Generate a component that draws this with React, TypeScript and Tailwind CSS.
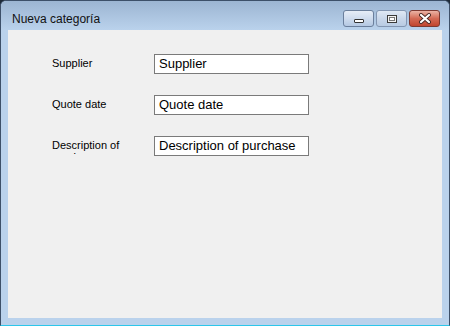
import React from "react";

const fields = [
  { label: "Supplier", value: "Supplier" },
  { label: "Quote date", value: "Quote date" },
  { label: "Description of purchase", value: "Description of purchase" },
];

const CaptionButtons: React.FC = () => (
  <div className="flex items-start gap-[2px] pt-[9px] pr-[9px]">
    <div className="w-[31px] h-[17px] rounded-[3px] border border-[#6b7f9c] bg-gradient-to-b from-[#e6edf7] via-[#cfdcee] to-[#b4c8e2] flex items-end justify-center pb-[3px]">
      <div className="w-[10px] h-[4px] bg-white border border-[#333] rounded-[1px]" />
    </div>
    <div className="w-[31px] h-[17px] rounded-[3px] border border-[#8396b2] bg-gradient-to-b from-[#dfe8f4] via-[#c9d7ea] to-[#b8cbe3] flex items-center justify-center">
      <div className="w-[10px] h-[8px] border border-[#3a3a3a] bg-[#f4f4f4] flex items-center justify-center">
        <div className="w-[6px] h-[4px] border border-[#777] bg-white" />
      </div>
    </div>
    <div className="w-[31px] h-[17px] rounded-[3px] border border-[#7d3a32] bg-gradient-to-b from-[#eab3a5] via-[#d36a55] to-[#c1452f] flex items-center justify-center">
      <svg width="14" height="11" viewBox="0 0 14 11">
        <path d="M3 2 L11 9 M11 2 L3 9" stroke="#4a2a26" strokeWidth="4" strokeLinecap="round" />
        <path d="M3 2 L11 9 M11 2 L3 9" stroke="#ffffff" strokeWidth="2.2" strokeLinecap="round" />
      </svg>
    </div>
  </div>
);

export default function App() {
  return (
    <div className="w-[450px] h-[326px] bg-[#1e2a38]">
      <div className="w-[450px] h-[326px] flex flex-col bg-[#bad2ec] border border-[#3d5069] border-b-[#2cc6ea] rounded-t-[6px] overflow-hidden">
        <div className="h-[29px] flex items-start justify-between bg-gradient-to-b from-[#9cb5d2] to-[#bad2ec]">
          <div
            className="pl-[11px] pt-[11px] text-[12px] leading-[15px] text-[#111]"
            style={{ fontFamily: '"Liberation Sans", Arial, sans-serif' }}
          >
            Nueva categoría
          </div>
          <CaptionButtons />
        </div>
        <div className="flex-1 px-[7px] pb-[7px]">
          <div className="h-full bg-[#f0f0f0] pt-[24px] pl-[44px]">
            {fields.map((f) => (
              <div key={f.label} className="flex items-start h-[41px]">
                <div
                  className="w-[102px] h-[18px] pt-[3px] overflow-hidden text-[11px] leading-[12px] text-black"
                  style={{ fontFamily: '"Liberation Sans", Arial, sans-serif' }}
                >
                  {f.label}
                </div>
                <div
                  className="w-[155px] h-[20px] border border-[#7a7a7a] bg-white pl-[4px] text-[13px] leading-[18px] text-black whitespace-nowrap overflow-hidden"
                  style={{ fontFamily: '"Liberation Sans", Arial, sans-serif' }}
                >
                  {f.value}
                </div>
              </div>
            ))}
          </div>
        </div>
      </div>
    </div>
  );
}
